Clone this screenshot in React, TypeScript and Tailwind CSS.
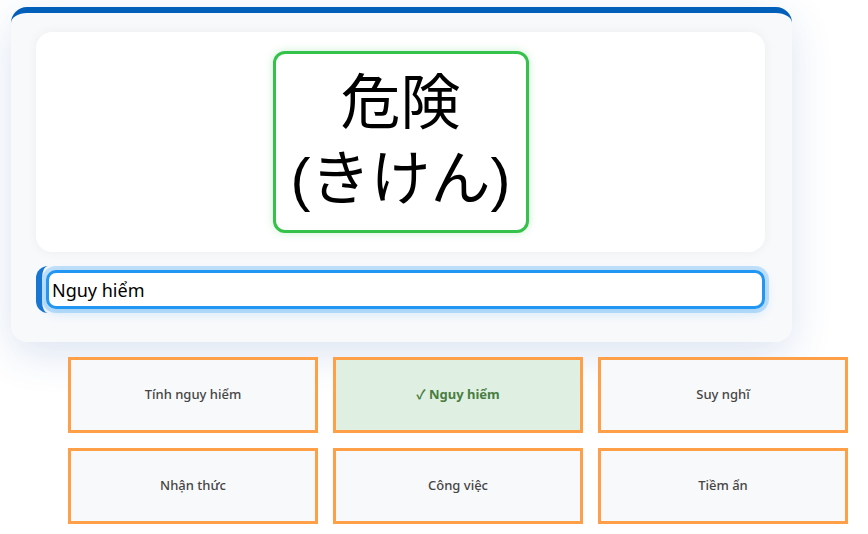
import React, { useState } from "react";

const options = [
  "Tính nguy hiểm",
  "Nguy hiểm",
  "Suy nghĩ",
  "Nhận thức",
  "Công việc",
  "Tiềm ẩn",
];

const App = () => {
  const [answer, setAnswer] = useState<string>("Nguy hiểm");
  const correct = "Nguy hiểm";

  return (
    <div className="min-h-screen w-full bg-white pt-[7px] font-['Noto_Sans','Noto_Sans_CJK_JP',sans-serif]">
      <div className="ml-[11px] w-[781px] rounded-[16px] border-t-[6px] border-[#005fb8] bg-[#f8f9fb] pl-[25px] pr-[27px] pt-[19px] pb-[29px] shadow-[0_12px_40px_rgba(40,90,170,0.16)]">
        <div className="flex items-center justify-center rounded-[16px] bg-white py-[19px] shadow-[0_0_12px_rgba(0,0,0,0.05)]">
          <div className="flex h-[182px] w-[256px] flex-col items-center justify-center rounded-[12px] border-[3px] border-[#35c24b] bg-white pb-[6px] shadow-[0_0_8px_rgba(53,194,75,0.25)]">
            <div className="text-[60px] leading-[76px] text-black font-['Noto_Sans_CJK_JP',sans-serif]">危険</div>
            <div className="text-[60px] leading-[76px] text-black font-['Noto_Sans_CJK_JP',sans-serif]">
              <span className="font-['Liberation_Sans',sans-serif]">(</span>きけん<span className="font-['Liberation_Sans',sans-serif]">)</span>
            </div>
          </div>
        </div>

        <div className="mt-[14px] rounded-[12px] border-l-[6px] border-[#1976d2] py-[4px] pl-[4px]">
          <input
            type="text"
            value={answer}
            onChange={(e) => setAnswer(e.target.value)}
            className="h-[39px] w-full rounded-[10px] border-[3px] border-[#2196f3] bg-white px-[3px] text-[18px] text-black shadow-[0_0_0_4px_rgba(33,150,243,0.25),0_4px_12px_rgba(33,150,243,0.2)] outline-none font-['Noto_Sans',sans-serif]"
          />
        </div>
      </div>

      <div className="ml-[68px] mt-[15px] grid w-[780px] grid-cols-3 gap-[15px]">
        {options.map((opt) => {
          const isCorrect = opt === correct;
          return (
            <div
              key={opt}
              className={`flex h-[76px] items-center justify-center border-[3px] border-[#ffa048] text-[13px] ${
                isCorrect ? "bg-[#dff0e2] font-bold text-[#4a7d40]" : "bg-[#f8f9fa] font-medium text-[#454545]"
              }`}
            >
              {isCorrect ? `✓ ${opt}` : opt}
            </div>
          );
        })}
      </div>
    </div>
  );
};

export default App;
